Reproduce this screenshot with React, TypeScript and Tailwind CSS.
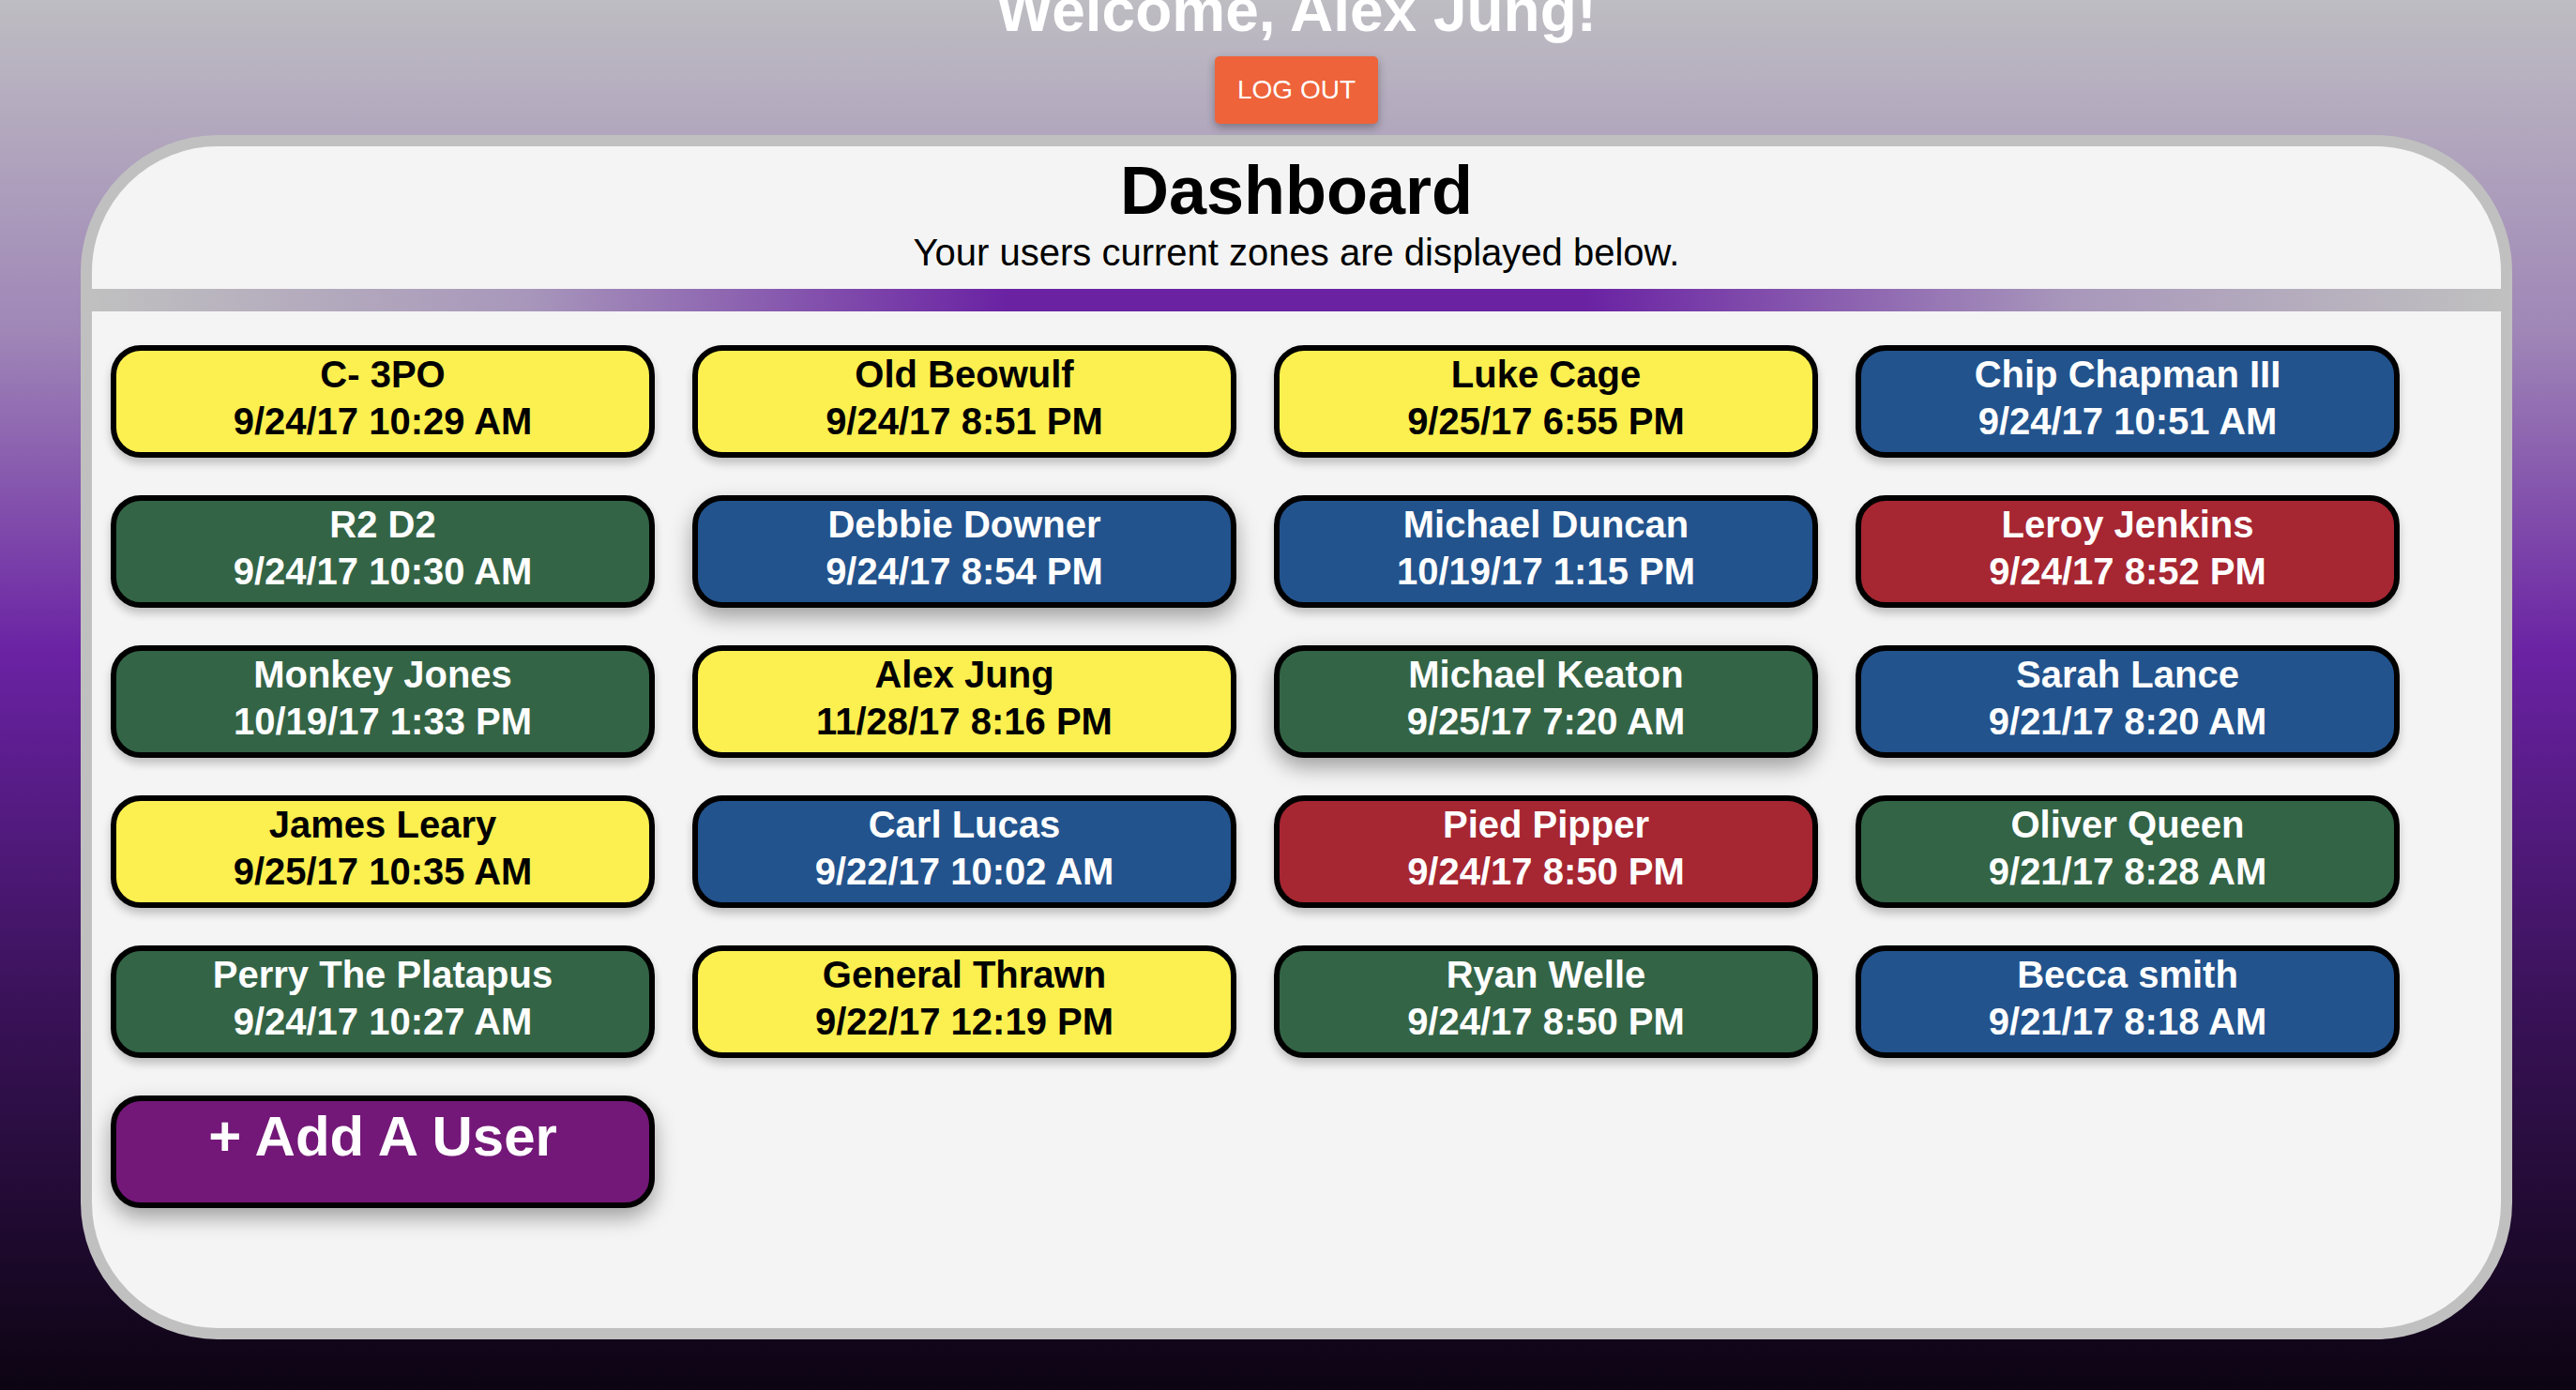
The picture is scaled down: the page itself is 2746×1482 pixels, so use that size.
const font = { fontFamily: '"Liberation Sans", Helvetica, Arial, sans-serif' };

type Zone = "yellow" | "green" | "blue" | "red";

type User = {
  name: string;
  time: string;
  zone: Zone;
  lifted?: boolean;
};

const users: User[] = [
  { name: "C- 3PO", time: "9/24/17 10:29 AM", zone: "yellow" },
  { name: "Old Beowulf", time: "9/24/17 8:51 PM", zone: "yellow" },
  { name: "Luke Cage", time: "9/25/17 6:55 PM", zone: "yellow" },
  { name: "Chip Chapman III", time: "9/24/17 10:51 AM", zone: "blue" },
  { name: "R2 D2", time: "9/24/17 10:30 AM", zone: "green" },
  { name: "Debbie Downer", time: "9/24/17 8:54 PM", zone: "blue", lifted: true },
  { name: "Michael Duncan", time: "10/19/17 1:15 PM", zone: "blue" },
  { name: "Leroy Jenkins", time: "9/24/17 8:52 PM", zone: "red" },
  { name: "Monkey Jones", time: "10/19/17 1:33 PM", zone: "green" },
  { name: "Alex Jung", time: "11/28/17 8:16 PM", zone: "yellow" },
  { name: "Michael Keaton", time: "9/25/17 7:20 AM", zone: "green", lifted: true },
  { name: "Sarah Lance", time: "9/21/17 8:20 AM", zone: "blue" },
  { name: "James Leary", time: "9/25/17 10:35 AM", zone: "yellow" },
  { name: "Carl Lucas", time: "9/22/17 10:02 AM", zone: "blue" },
  { name: "Pied Pipper", time: "9/24/17 8:50 PM", zone: "red" },
  { name: "Oliver Queen", time: "9/21/17 8:28 AM", zone: "green" },
  { name: "Perry The Platapus", time: "9/24/17 10:27 AM", zone: "green" },
  { name: "General Thrawn", time: "9/22/17 12:19 PM", zone: "yellow" },
  { name: "Ryan Welle", time: "9/24/17 8:50 PM", zone: "green" },
  { name: "Becca smith", time: "9/21/17 8:18 AM", zone: "blue" },
];

const zoneClass: Record<Zone, string> = {
  yellow: "bg-[#fcef50] text-black",
  green: "bg-[#336446] text-white",
  blue: "bg-[#22538d] text-white",
  red: "bg-[#a62632] text-white",
};

const UserCard = ({ name, time, zone, lifted }: User) => (
  <div
    className={`box-border h-[120px] w-[580px] rounded-[32px] border-[6px] border-black text-center font-bold text-[40px] leading-[50px] ${
      zoneClass[zone]
    } ${
      lifted
        ? "shadow-[0_10px_22px_rgba(0,0,0,0.35)]"
        : "shadow-[0_6px_10px_rgba(0,0,0,0.22)]"
    }`}
  >
    <div>{name}</div>
    <div>{time}</div>
  </div>
);

export default function App() {
  return (
    <div
      style={font}
      className="h-[1482px] overflow-hidden bg-[linear-gradient(180deg,#bebdc2_0%,#9f86b7_24%,#6a22a3_47%,#3a1259_72%,#0c0412_100%)]"
    >
      <div className="ml-[86px] mr-[68px] flex flex-col items-center">
        <h1 className="mt-[-26px] text-[64px] font-bold leading-[74px] text-white">
          Welcome, Alex Jung!
        </h1>
        <button className="mt-[12px] h-[72px] rounded-[5px] bg-[#ee633a] px-[24px] text-[28px] text-white shadow-[0_4px_10px_rgba(0,0,0,0.3)]">
          LOG OUT
        </button>
      </div>

      <div className="ml-[86px] mr-[68px] mt-[12px] overflow-hidden rounded-[146px] border-[12px] border-[#c0c0c0] bg-[#f4f4f4]">
        <div className="pb-[15px] pt-[7px] text-center">
          <h2 className="text-[72px] font-bold leading-[80px] text-black">Dashboard</h2>
          <p className="mt-[2px] text-[40px] leading-[48px] text-black">
            Your users current zones are displayed below.
          </p>
        </div>
        <div className="h-[24px] bg-[linear-gradient(90deg,#c0c0c0_0%,#a897bb_18%,#6a22a3_38%,#6a22a3_62%,#a897bb_82%,#c0c0c0_100%)]" />
        <div className="grid grid-cols-[repeat(4,580px)] gap-[40px] pb-[128px] pl-[20px] pt-[36px]">
          {users.map((u) => (
            <UserCard key={u.name} {...u} />
          ))}
          <div className="box-border h-[120px] w-[580px] rounded-[32px] border-[6px] border-black bg-[#731878] text-center text-[60px] font-bold leading-[75px] text-white shadow-[0_10px_22px_rgba(0,0,0,0.35)]">
            + Add A User
          </div>
        </div>
      </div>
    </div>
  );
}
